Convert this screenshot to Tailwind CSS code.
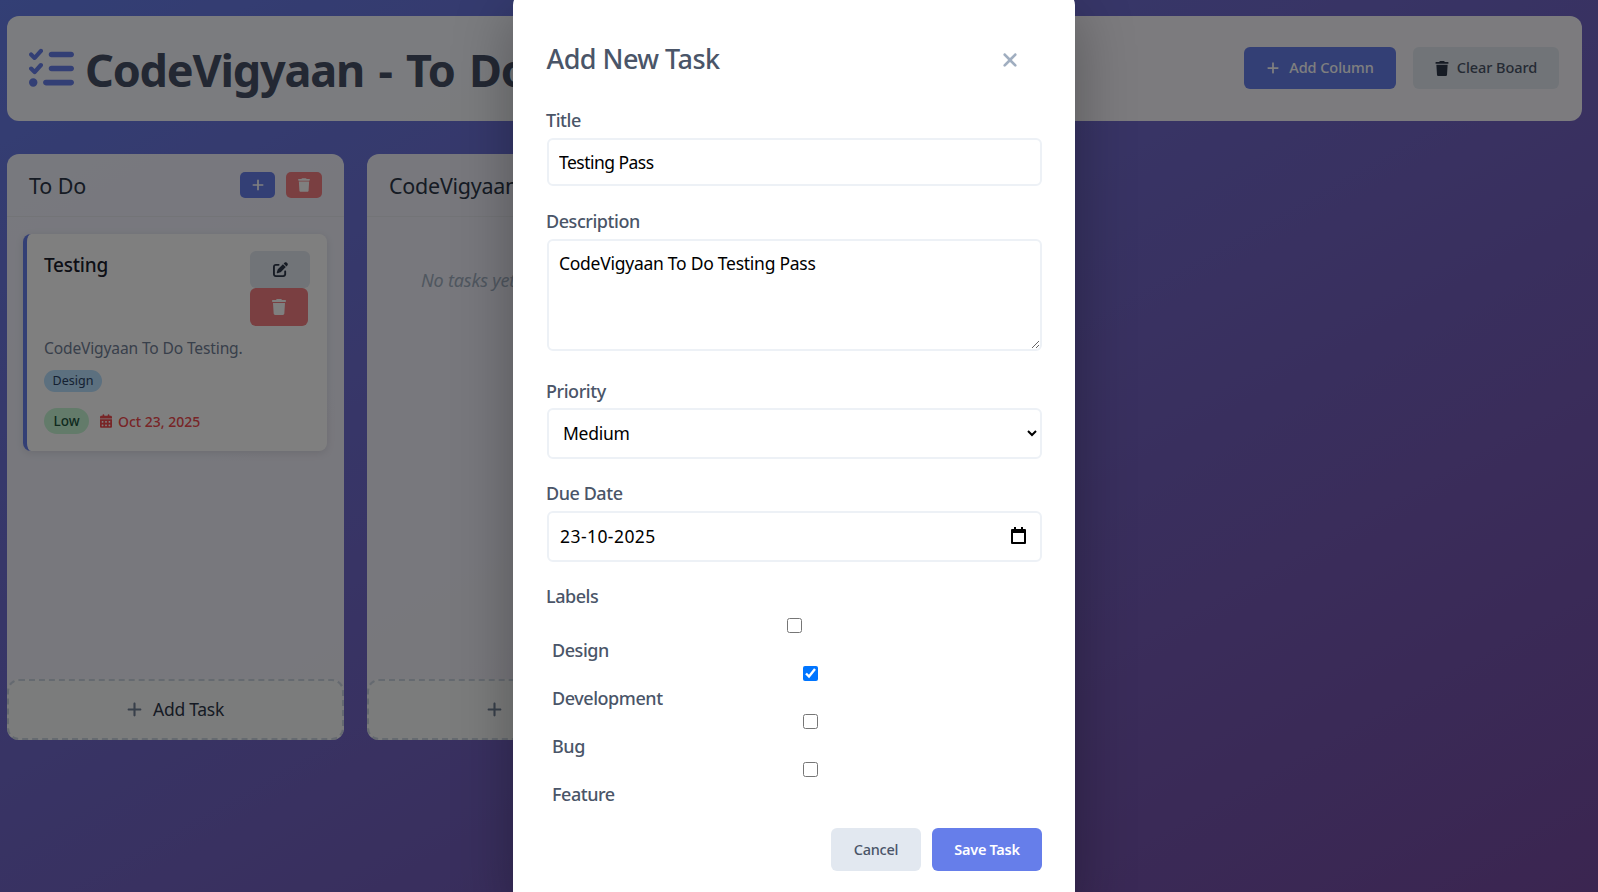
<!DOCTYPE html>
<html lang="en">
<head>
<meta charset="utf-8">
<title>CodeVigyaan - To Do</title>
<script src="https://cdn.jsdelivr.net/npm/@tailwindcss/browser@4"></script>
</head>
<body class="font-['Noto_Sans','Open_Sans',sans-serif]">
<div class="relative h-[892px] w-full overflow-hidden bg-gradient-to-br from-[#667eea] to-[#764ba2]">
  <!-- board -->
  <div class="pl-[7px] pr-[16px] pt-[16px]">
    <header class="flex h-[105px] items-center justify-between rounded-[12px] bg-white/95 pl-[22px] pr-[23px]">
      <h1 class="flex items-center gap-[11px] text-[45px] font-bold whitespace-nowrap tracking-[-0.027em] [word-spacing:4px] text-[#465067]">
        <svg class="h-[45px] w-[45px] fill-[#667eea]" viewBox="0 0 512 512"><path d="M152.1 38.2c9.9 8.9 10.7 24 1.8 33.9l-72 80c-4.4 4.9-10.6 7.8-17.2 7.9s-12.9-2.4-17.6-7L7 113C-2.3 103.6-2.3 88.4 7 79s24.6-9.4 33.9 0l22.1 22.1 55.1-61.2c8.9-9.9 24-10.7 33.9-1.8zm0 160c9.9 8.9 10.7 24 1.8 33.9l-72 80c-4.4 4.9-10.6 7.8-17.2 7.9s-12.9-2.4-17.6-7L7 273c-9.4-9.4-9.4-24.6 0-33.9s24.6-9.4 33.9 0l22.1 22.1 55.1-61.2c8.9-9.9 24-10.7 33.9-1.8zM224 96c0-17.7 14.3-32 32-32H480c17.7 0 32 14.3 32 32s-14.3 32-32 32H256c-17.7 0-32-14.3-32-32zm0 160c0-17.7 14.3-32 32-32H480c17.7 0 32 14.3 32 32s-14.3 32-32 32H256c-17.7 0-32-14.3-32-32zM160 416c0-17.7 14.3-32 32-32H480c17.7 0 32 14.3 32 32s-14.3 32-32 32H192c-17.7 0-32-14.3-32-32zM48 368a48 48 0 1 1 0 96 48 48 0 1 1 0-96z"/></svg>
        <span class="pt-[2px]">CodeVigyaan - To Do</span>
      </h1>
      <div class="mb-[2px] flex gap-[17px]">
        <button class="flex h-[42px] w-[152px] items-center justify-center gap-[9px] rounded-[6px] bg-[#667eea] pt-[1px] text-[14.5px] font-medium tracking-[-0.005em] text-white">
          <svg class="h-[14px] w-[14px] fill-current" viewBox="0 0 448 512"><path d="M256 80c0-17.7-14.3-32-32-32s-32 14.3-32 32V224H48c-17.7 0-32 14.3-32 32s14.3 32 32 32H192V432c0 17.7 14.3 32 32 32s32-14.3 32-32V288H400c17.7 0 32-14.3 32-32s-14.3-32-32-32H256V80z"/></svg>
          Add Column
        </button>
        <button class="flex h-[42px] w-[146px] items-center justify-center gap-[8px] rounded-[6px] bg-[#e2e8f0] pt-[1px] text-[14.5px] font-medium tracking-[-0.005em] text-[#4a5568]">
          <svg class="h-[15px] w-[14px] fill-[#2d3748]" viewBox="0 0 448 512"><path d="M135.2 17.7L128 32H32C14.3 32 0 46.3 0 64S14.3 96 32 96H416c17.7 0 32-14.3 32-32s-14.3-32-32-32H320l-7.2-14.3C307.4 6.8 296.3 0 284.2 0H163.8c-12.1 0-23.2 6.8-28.6 17.7zM416 128H32L53.2 467c1.6 25.3 22.6 45 47.9 45H346.9c25.3 0 46.3-19.7 47.9-45L416 128z"/></svg>
          Clear Board
        </button>
      </div>
    </header>

    <main class="mt-[33px] flex gap-[23px]">
      <section class="flex h-[586px] w-[337px] flex-col rounded-[12px] bg-white/90">
        <div class="flex h-[63px] items-center justify-between border-b border-[#e6e8ee] pl-[22px] pr-[22px]">
          <h2 class="pt-[3px] text-[21.5px] font-normal tracking-[-0.005em] text-[#2d3748]">To Do</h2>
          <div class="flex gap-[11px]">
            <button class="flex h-[26px] w-[35px] items-center justify-center rounded-[5px] bg-[#667eea] text-white">
              <svg class="h-[14px] w-[12px] fill-current" viewBox="0 0 448 512"><path d="M256 80c0-17.7-14.3-32-32-32s-32 14.3-32 32V224H48c-17.7 0-32 14.3-32 32s14.3 32 32 32H192V432c0 17.7 14.3 32 32 32s32-14.3 32-32V288H400c17.7 0 32-14.3 32-32s-14.3-32-32-32H256V80z"/></svg>
            </button>
            <button class="flex h-[26px] w-[36px] items-center justify-center rounded-[5px] bg-[#f47e82] text-white">
              <svg class="h-[14px] w-[12px] fill-current" viewBox="0 0 448 512"><path d="M135.2 17.7L128 32H32C14.3 32 0 46.3 0 64S14.3 96 32 96H416c17.7 0 32-14.3 32-32s-14.3-32-32-32H320l-7.2-14.3C307.4 6.8 296.3 0 284.2 0H163.8c-12.1 0-23.2 6.8-28.6 17.7zM416 128H32L53.2 467c1.6 25.3 22.6 45 47.9 45H346.9c25.3 0 46.3-19.7 47.9-45L416 128z"/></svg>
            </button>
          </div>
        </div>
        <div class="flex-1 pl-[16px] pr-[17px] pt-[17px]">
          <article class="h-[217px] rounded-[8px] border-l-[4px] border-[#667eea] bg-white pl-[17px] pr-[17px] pt-[17px] shadow-[0_2px_8px_rgba(0,0,0,0.1)]">
            <div class="flex justify-between">
              <h3 class="text-[19px] leading-[28px] font-medium tracking-[-0.012em] text-[#1a202c]">Testing</h3>
              <div class="flex w-[60px] flex-col items-start">
                <button class="flex h-[37px] w-[60px] items-center justify-center rounded-[6px] bg-[#e2e8f0] text-[#2d3748]">
                  <svg class="h-[15px] w-[15px] fill-current" viewBox="0 0 512 512"><path d="M471.6 21.7c-21.9-21.9-57.3-21.9-79.2 0L362.3 51.7l97.9 97.9 30.1-30.1c21.9-21.9 21.9-57.3 0-79.2L471.6 21.7zm-299.2 220c-6.1 6.1-10.8 13.6-13.5 21.9l-29.6 88.8c-2.9 8.6-.6 18.1 5.8 24.6s15.9 8.7 24.6 5.8l88.8-29.6c8.2-2.7 15.7-7.4 21.9-13.5L437.7 172.3 339.7 74.3 172.4 241.7zM96 64C43 64 0 107 0 160V416c0 53 43 96 96 96H352c53 0 96-43 96-96V320c0-17.7-14.3-32-32-32s-32 14.3-32 32v96c0 17.7-14.3 32-32 32H96c-17.7 0-32-14.3-32-32V160c0-17.7 14.3-32 32-32h96c17.7 0 32-14.3 32-32s-14.3-32-32-32H96z"/></svg>
                </button>
                <button class="flex h-[38px] w-[58px] items-center justify-center rounded-[6px] bg-[#f47e82] text-white">
                  <svg class="h-[16px] w-[14px] fill-current" viewBox="0 0 448 512"><path d="M135.2 17.7L128 32H32C14.3 32 0 46.3 0 64S14.3 96 32 96H416c17.7 0 32-14.3 32-32s-14.3-32-32-32H320l-7.2-14.3C307.4 6.8 296.3 0 284.2 0H163.8c-12.1 0-23.2 6.8-28.6 17.7zM416 128H32L53.2 467c1.6 25.3 22.6 45 47.9 45H346.9c25.3 0 46.3-19.7 47.9-45L416 128z"/></svg>
                </button>
              </div>
            </div>
            <p class="mt-[12px] text-[15.6px] leading-[20px] tracking-[-0.01em] text-[#718096]">CodeVigyaan To Do Testing.</p>
            <span class="mt-[12px] flex h-[22px] w-[58px] items-center justify-center rounded-full bg-[#b8e0ff] pt-[1px] text-[12.5px] text-[#2a4365]">Design</span>
            <div class="mt-[16px] flex h-[26px] items-center gap-[11px]">
              <span class="flex h-[26px] w-[45px] items-center justify-center rounded-full bg-[#c6f6d5] pt-[1px] text-[13.5px] font-medium text-[#22543d]">Low</span>
              <span class="flex items-center gap-[6px] text-[14px] font-medium text-[#f04a4e]">
                <svg class="h-[14px] w-[12px] fill-current" viewBox="0 0 448 512"><path d="M128 0c17.7 0 32 14.3 32 32V64H288V32c0-17.7 14.3-32 32-32s32 14.3 32 32V64h48c26.5 0 48 21.5 48 48v48H0V112C0 85.5 21.5 64 48 64H96V32c0-17.7 14.3-32 32-32zM0 192H448V464c0 26.5-21.5 48-48 48H48c-26.5 0-48-21.5-48-48V192zm64 80v32c0 8.8 7.2 16 16 16h32c8.8 0 16-7.2 16-16V272c0-8.8-7.2-16-16-16H80c-8.8 0-16 7.2-16 16zm128 0v32c0 8.8 7.2 16 16 16h32c8.8 0 16-7.2 16-16V272c0-8.8-7.2-16-16-16H208c-8.8 0-16 7.2-16 16zm144-16c-8.8 0-16 7.2-16 16v32c0 8.8 7.2 16 16 16h32c8.8 0 16-7.2 16-16V272c0-8.8-7.2-16-16-16H336zM64 400v32c0 8.8 7.2 16 16 16h32c8.8 0 16-7.2 16-16V400c0-8.8-7.2-16-16-16H80c-8.8 0-16 7.2-16 16zm144-16c-8.8 0-16 7.2-16 16v32c0 8.8 7.2 16 16 16h32c8.8 0 16-7.2 16-16V400c0-8.8-7.2-16-16-16H208zm112 16v32c0 8.8 7.2 16 16 16h32c8.8 0 16-7.2 16-16V400c0-8.8-7.2-16-16-16H336c-8.8 0-16 7.2-16 16z"/></svg>
                Oct 23, 2025
              </span>
            </div>
          </article>
        </div>
        <button class="flex h-[61px] items-center justify-center gap-[11px] rounded-[12px] border-2 border-dashed border-[#cbd5e0] bg-[#f7f8f9] text-[17.5px] tracking-[-0.015em] text-[#2d3748]">
          <svg class="h-[17px] w-[15px] fill-[#718096]" viewBox="0 0 448 512"><path d="M256 80c0-17.7-14.3-32-32-32s-32 14.3-32 32V224H48c-17.7 0-32 14.3-32 32s14.3 32 32 32H192V432c0 17.7 14.3 32 32 32s32-14.3 32-32V288H400c17.7 0 32-14.3 32-32s-14.3-32-32-32H256V80z"/></svg>
          Add Task
        </button>
      </section>

      <section class="flex h-[586px] w-[337px] flex-col rounded-[12px] bg-white/90">
        <div class="flex h-[63px] items-center border-b border-[#e6e8ee] pl-[22px]">
          <h2 class="pt-[3px] text-[21.5px] tracking-[-0.012em] text-[#2d3748]">CodeVigyaan</h2>
        </div>
        <p class="flex-1 pl-[54px] pt-[51px] text-[18px] italic leading-[24px] tracking-[-0.01em] text-[#a0aec0]">No tasks yet</p>
        <button class="flex h-[61px] items-center gap-[10px] rounded-[12px] border-2 border-dashed border-[#cbd5e0] bg-[#f7f8f9] pl-[118px]">
          <svg class="h-[17px] w-[15px] fill-[#718096]" viewBox="0 0 448 512"><path d="M256 80c0-17.7-14.3-32-32-32s-32 14.3-32 32V224H48c-17.7 0-32 14.3-32 32s14.3 32 32 32H192V432c0 17.7 14.3 32 32 32s32-14.3 32-32V288H400c17.7 0 32-14.3 32-32s-14.3-32-32-32H256V80z"/></svg>
        </button>
      </section>
    </main>
  </div>

  <!-- dim overlay + modal -->
  <div class="absolute inset-0 bg-black/50 pl-[513px]">
    <div class="-mt-[7px] h-[910px] w-[562px] rounded-[12px] bg-white pl-[34px] pr-[33px] pt-[13px] shadow-[0_20px_60px_rgba(0,0,0,0.3)]">
      <div class="flex h-[103px] items-center justify-between pr-[24px]">
        <h2 class="-ml-[0.5px] mt-[3px] text-[27px] font-medium tracking-[-0.02em] text-[#4a5568]">Add New Task</h2>
        <svg class="mt-[4px] h-[22px] w-[16px] fill-[#a0aec0]" viewBox="0 0 384 512"><path d="M342.6 150.6c12.5-12.5 12.5-32.8 0-45.3s-32.8-12.5-45.3 0L192 210.7 86.6 105.4c-12.5-12.5-32.8-12.5-45.3 0s-12.5 32.8 0 45.3L146.7 256 41.4 361.4c-12.5 12.5-12.5 32.8 0 45.3s32.8 12.5 45.3 0L192 301.3 297.4 406.6c12.5 12.5 32.8 12.5 45.3 0s12.5-32.8 0-45.3L237.3 256 342.6 150.6z"/></svg>
      </div>
      <form>
        <label class="-ml-[1px] mb-[7px] block text-[18px] leading-[22px] font-medium tracking-[-0.025em] text-[#4a5568]">Title</label>
        <input type="text" value="Testing Pass" class="block h-[48px] w-full rounded-[6px] border-2 border-[#edf1f6] px-[10px] text-[17.5px] tracking-[-0.03em] text-black">

        <label class="-ml-[1px] mb-[7px] mt-[24px] block text-[18px] leading-[22px] font-medium tracking-[-0.025em] text-[#4a5568]">Description</label>
        <textarea class="block h-[112px] w-full rounded-[6px] border-2 border-[#edf1f6] px-[10px] pt-[10px] text-[17.5px] leading-[24px] tracking-[-0.015em] text-black">CodeVigyaan To Do Testing Pass</textarea>

        <label class="-ml-[1px] mb-[6px] mt-[29px] block text-[18px] leading-[22px] font-medium tracking-[-0.025em] text-[#4a5568]">Priority</label>
        <select class="block h-[51px] w-full rounded-[6px] border-2 border-[#edf1f6] bg-white px-[10px] pb-[2px] text-[17.5px] tracking-[-0.015em] text-black">
          <option>Low</option>
          <option selected>Medium</option>
          <option>High</option>
        </select>

        <label class="-ml-[1px] mb-[7px] mt-[23px] block text-[18px] leading-[22px] font-medium tracking-[-0.025em] text-[#4a5568]">Due Date</label>
        <div class="relative">
          <input type="text" value="23-10-2025" class="block h-[51px] w-full rounded-[6px] border-2 border-[#edf1f6] px-[11px] pb-[2px] text-[17.5px] tracking-[0.025em] text-black">
          <svg class="absolute right-[16px] top-[16px] h-[17px] w-[15px]" viewBox="0 0 15 17"><path d="M3 0h2v2h5V0h2v2h2a1 1 0 0 1 1 1v13a1 1 0 0 1-1 1H1a1 1 0 0 1-1-1V3a1 1 0 0 1 1-1h2zM2 6v9h11V6z" fill="#000"/></svg>
        </div>

        <label class="-ml-[1px] mb-[6px] mt-[23px] block text-[18px] leading-[22px] font-medium tracking-[-0.025em] text-[#4a5568]">Labels</label>
        <div>
          <div class="flex h-[48px] flex-col">
            <input type="checkbox" class="ml-[240px] mt-[5px] h-[15px] w-[15px] shrink-0">
            <span class="mt-[6px] pl-[5px] text-[18px] leading-[22px] font-medium tracking-[-0.025em] text-[#4a5568]">Design</span>
          </div>
          <div class="flex h-[48px] flex-col">
            <input type="checkbox" checked class="ml-[256px] mt-[5px] h-[15px] w-[15px] shrink-0">
            <span class="mt-[6px] pl-[5px] text-[18px] leading-[22px] font-medium tracking-[-0.025em] text-[#4a5568]">Development</span>
          </div>
          <div class="flex h-[48px] flex-col">
            <input type="checkbox" class="ml-[256px] mt-[5px] h-[15px] w-[15px] shrink-0">
            <span class="mt-[6px] pl-[5px] text-[18px] leading-[22px] font-medium tracking-[-0.025em] text-[#4a5568]">Bug</span>
          </div>
          <div class="flex h-[48px] flex-col">
            <input type="checkbox" class="ml-[256px] mt-[5px] h-[15px] w-[15px] shrink-0">
            <span class="mt-[6px] pl-[5px] text-[18px] leading-[22px] font-medium tracking-[-0.025em] text-[#4a5568]">Feature</span>
          </div>
        </div>

        <div class="mt-[23px] flex justify-end gap-[11px]">
          <button type="button" class="h-[43px] w-[90px] rounded-[6px] bg-[#e2e8f0] text-[14.5px] font-medium tracking-[-0.015em] text-[#4a5568]">Cancel</button>
          <button type="button" class="h-[43px] w-[110px] rounded-[6px] bg-[#667eea] text-[14.5px] font-semibold tracking-[-0.02em] text-white">Save Task</button>
        </div>
      </form>
    </div>
  </div>
</div>
</body>
</html>
